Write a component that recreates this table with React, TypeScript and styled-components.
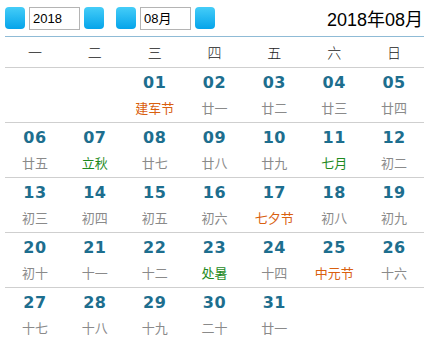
import styled, { createGlobalStyle } from 'styled-components';

const Global = createGlobalStyle`
  html, body { margin: 0; padding: 0; background: #fff; }
  body { font-family: "Liberation Sans", "Noto Sans CJK SC", sans-serif; }
`

const Wrap = styled.div`
  width: 419px;
  padding: 0 5px;
`

const Toolbar = styled.div`
  display: flex;
  align-items: center;
  height: 36px;
  border-bottom: 1px solid #8fbbd6;
`

const NavButton = styled.button`
  width: 20px;
  height: 22px;
  padding: 0;
  border: none;
  border-radius: 4px;
  background: linear-gradient(#45cdf8, #05a4ea);
  margin-left: ${(p) => p.$gap || 0}px;
`

const Field = styled.div`
  width: 46px;
  height: 21px;
  margin-left: 4px;
  border: 1px solid #b4b4b4;
  font-size: 13px;
  line-height: 21px;
  padding-left: 3px;
  color: #000;
  box-sizing: content-box;
`

const Title = styled.div`
  margin-left: auto;
  font-size: 18px;
  color: #000;
  padding-right: 1px;
`

const Grid = styled.div`
  display: grid;
  grid-template-columns: repeat(7, 1fr);
`

const WeekDay = styled.div`
  height: 30px;
  line-height: 30px;
  text-align: center;
  font-size: 14px;
  color: #222;
  border-bottom: 1px solid #cfcfcf;
  font-family: "Noto Sans CJK SC", sans-serif;
  font-weight: 300;
`

const Cell = styled.div`
  height: 54px;
  border-bottom: ${(p) => (p.$last ? 'none' : '1px solid #cfcfcf')};
  display: flex;
  flex-direction: column;
  align-items: center;
`

const Num = styled.div`
  margin-top: 5px;
  font-family: "DejaVu Sans", sans-serif;
  font-weight: bold;
  font-size: 16px;
  line-height: 20px;
  color: #1d6e8e;
  letter-spacing: 0.5px;
`

const Lunar = styled.div`
  margin-top: 6px;
  font-size: 13px;
  line-height: 18px;
  font-family: "Noto Sans CJK SC", sans-serif;
  color: ${(p) => (p.$kind === 'fest' ? '#d9600f' : p.$kind === 'term' ? '#1e8a1e' : '#8a8a8a')};
`

const weekDays = ['一', '二', '三', '四', '五', '六', '日']

const lunar: [string, string?][] = [
  ['建军节', 'fest'], ['廿一'], ['廿二'], ['廿三'], ['廿四'],
  ['廿五'], ['立秋', 'term'], ['廿七'], ['廿八'], ['廿九'], ['七月', 'term'], ['初二'],
  ['初三'], ['初四'], ['初五'], ['初六'], ['七夕节', 'fest'], ['初八'], ['初九'],
  ['初十'], ['十一'], ['十二'], ['处暑', 'term'], ['十四'], ['中元节', 'fest'], ['十六'],
  ['十七'], ['十八'], ['十九'], ['二十'], ['廿一'],
]

export default function App() {
  const cells: ({ day: number; text: string; kind?: string } | null)[] = [null, null]
  lunar.forEach(([text, kind], i) => cells.push({ day: i + 1, text, kind }))
  while (cells.length % 7) cells.push(null)
  const lastRowStart = cells.length - 7

  return (
    <Wrap>
      <Global />
      <Toolbar>
        <NavButton />
        <Field>2018</Field>
        <NavButton $gap={4} />
        <NavButton $gap={12} />
        <Field>08月</Field>
        <NavButton $gap={4} />
        <Title>2018年08月</Title>
      </Toolbar>
      <Grid>
        {weekDays.map((w) => (
          <WeekDay key={w}>{w}</WeekDay>
        ))}
        {cells.map((c, i) => (
          <Cell key={i} $last={i >= lastRowStart}>
            {c && (
              <>
                <Num>{String(c.day).padStart(2, '0')}</Num>
                <Lunar $kind={c.kind}>{c.text}</Lunar>
              </>
            )}
          </Cell>
        ))}
      </Grid>
    </Wrap>
  )
}
